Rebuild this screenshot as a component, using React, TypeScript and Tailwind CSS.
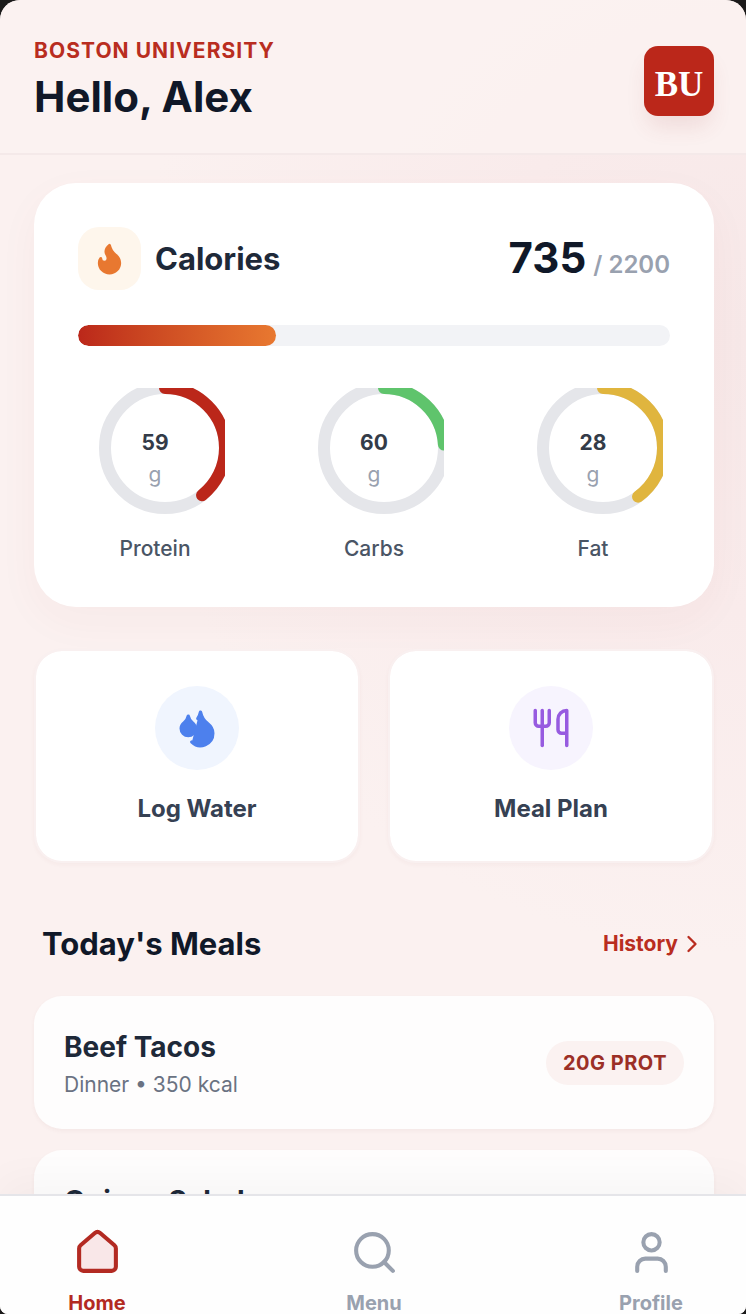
import { ChevronRight, Droplets, Search, User, Utensils } from 'lucide-react';

const macros = [
  { label: 'Protein', grams: 59, goal: 150, stroke: 'stroke-[#bb271a]' },
  { label: 'Carbs', grams: 60, goal: 250, stroke: 'stroke-[#5fc46c]' },
  { label: 'Fat', grams: 28, goal: 70, stroke: 'stroke-[#e0b53e]' },
];

const meals = [
  { name: 'Beef Tacos', info: 'Dinner • 350 kcal', protein: '20G PROT' },
  { name: 'Quinoa Salad', info: 'Lunch • 385 kcal', protein: '12G PROT' },
];

function MacroRing({ label, grams, goal, stroke }: (typeof macros)[number]) {
  const length = 2 * Math.PI * 60;

  return (
    <div className="w-28 flex flex-col items-center">
      <div className="relative w-28 h-[126px]">
        <svg className="w-[126px] h-[126px] max-w-none overflow-hidden" viewBox="0 0 126 126" fill="none">
          <circle cx="66" cy="60" r="60" strokeWidth="12" className="stroke-[#e5e6ea]" />
          <circle
            cx="66"
            cy="60"
            r="60"
            strokeWidth="12"
            strokeLinecap="round"
            strokeDasharray={length}
            strokeDashoffset={length * (1 - grams / goal)}
            transform="rotate(-90 66 60)"
            className={stroke}
          />
        </svg>
        <div className="absolute inset-0 pt-4 flex flex-col items-center justify-center">
          <span className="text-[21px] leading-8 font-bold text-[#333b48]">{grams}</span>
          <span className="text-[21px] leading-8 text-gray-400">g</span>
        </div>
      </div>
      <span className="mt-[21px] text-[21px] leading-7 font-medium text-gray-600">{label}</span>
    </div>
  );
}

function Flame() {
  return (
    <svg viewBox="0 0 24 24" className="w-[35px] h-[35px] fill-[#e87830] stroke-[#e87830]" strokeWidth="2" strokeLinecap="round" strokeLinejoin="round">
      <path d="M8.5 14.5A2.5 2.5 0 0 0 11 12c0-1.38-.5-2-1-3-1.072-2.143-.224-4.054 2-6 .5 2.5 2 4.9 4 6.5 2 1.6 3 3.5 3 5.5a7 7 0 1 1-14 0c0-1.153.433-2.294 1-3a2.5 2.5 0 0 0 2.5 2.5z" />
    </svg>
  );
}

function HomeIcon() {
  return (
    <svg viewBox="0 0 24 24" className="w-[49px] h-[49px] fill-[#f9e7e8] stroke-[#b32a22]" strokeWidth="2" strokeLinecap="round" strokeLinejoin="round">
      <path d="M3 10a2 2 0 0 1 .709-1.528l7-6a2 2 0 0 1 2.582 0l7 6A2 2 0 0 1 21 10v9a2 2 0 0 1-2 2H5a2 2 0 0 1-2-2z" />
    </svg>
  );
}

export default function App() {
  return (
    <div className="h-screen overflow-hidden bg-[#1b1a1a] font-['Inter',sans-serif]">
      <div className="h-full flex flex-col overflow-hidden rounded-t-[20px] rounded-b-lg bg-[#fbf1f0] bg-[radial-gradient(circle_at_100%_26%,#f7e8e8_0%,#f9ebeb_22%,#fbf1f0_50%)]">
        <header className="shrink-0 h-[155px] pl-[34px] pr-8 pt-2 flex items-center justify-between bg-[#fbf2f1]/80 border-b-2 border-[#f4e9e9]">
          <div className="pb-0.5">
            <p className="text-[21px] leading-7 font-bold tracking-wider text-[#b92d20]">BOSTON UNIVERSITY</p>
            <h1 className="mt-1.5 text-[42px] leading-[52px] font-bold text-gray-900">Hello, Alex</h1>
          </div>
          <button
            aria-label="Boston University"
            className="w-[70px] h-[70px] pt-2 rounded-[14px] bg-[#bb271a] text-white font-['Liberation_Serif',serif] font-bold text-[35px] leading-none shadow-[0_14px_22px_-4px_rgba(160,60,60,0.12)]"
          >
            BU
          </button>
        </header>

        <main className="flex-1 min-h-0 overflow-hidden pl-[34px] pr-8 pt-7">
          <section className="rounded-[42px] bg-white px-11 pt-11 pb-11 shadow-[0_14px_44px_rgba(150,60,60,0.04)]">
            <div className="flex items-center justify-between">
              <div className="flex items-center gap-3.5">
                <div className="w-[63px] h-[63px] rounded-[21px] bg-[#fef6ec] flex items-center justify-center">
                  <Flame />
                </div>
                <h2 className="text-[31px] leading-10 font-bold text-gray-800">Calories</h2>
              </div>
              <p className="pb-0.5 flex items-baseline gap-[7px]">
                <span className="text-[42px] leading-[50px] font-bold text-gray-900">735</span>
                <span className="text-[24px] leading-8 font-semibold text-gray-400">/ 2200</span>
              </p>
            </div>

            <div className="mt-[35px] h-[21px] rounded-full bg-[#f2f3f6] overflow-hidden">
              <div
                className="h-full rounded-full bg-gradient-to-r from-[#bb271a] to-[#e87830]"
                style={{ width: `${(735 / 2200) * 100}%` }}
              />
            </div>

            <div className="mt-[42px] px-[21px] flex justify-between">
              {macros.map((macro) => (
                <MacroRing key={macro.label} {...macro} />
              ))}
            </div>
          </section>

          <div className="mt-[42px] grid grid-cols-2 gap-7">
            <button className="h-[214px] rounded-[28px] bg-white bg-clip-padding border-2 border-[#f9f0f0] flex flex-col items-center justify-center gap-[21px] shadow-[0_2px_4px_rgba(120,50,50,0.04)]">
              <span className="w-[84px] h-[84px] rounded-full bg-[#f0f5fe] flex items-center justify-center">
                <Droplets className="w-[42px] h-[42px] text-[#4d80ed] fill-current" />
              </span>
              <span className="text-[24px] leading-9 font-bold text-gray-700">Log Water</span>
            </button>
            <button className="h-[214px] rounded-[28px] bg-white bg-clip-padding border-2 border-[#f9f0f0] flex flex-col items-center justify-center gap-[21px] shadow-[0_2px_4px_rgba(120,50,50,0.04)]">
              <span className="w-[84px] h-[84px] rounded-full bg-[#f7f4fe] flex items-center justify-center">
                <Utensils className="w-[42px] h-[42px] text-[#975be0]" />
              </span>
              <span className="text-[24px] leading-9 font-bold text-gray-700">Meal Plan</span>
            </button>
          </div>

          <div className="mt-[61px] px-2 flex items-center justify-between">
            <h2 className="text-[31px] leading-10 font-bold text-gray-900">Today's Meals</h2>
            <a href="#history" className="flex items-center text-[21px] leading-7 font-bold text-[#b92d20]">
              History
              <ChevronRight className="w-7 h-7" strokeWidth={2} />
            </a>
          </div>

          <ul className="mt-8 flex flex-col gap-[21px]">
            {meals.map((meal) => (
              <li key={meal.name} className="h-[133px] px-[30px] rounded-[28px] bg-[#fefdfd] flex items-center justify-between shadow-[0_2px_4px_rgba(120,50,50,0.05)]">
                <div className="pt-1">
                  <h3 className="text-[28px] leading-10 font-bold text-gray-800">{meal.name}</h3>
                  <p className="text-[21px] leading-9 text-gray-500">{meal.info}</p>
                </div>
                <span className="px-[17px] py-2 rounded-full bg-[#fbf2f1] text-[20px] leading-7 font-bold tracking-wide text-[#9c2f26]">{meal.protein}</span>
              </li>
            ))}
          </ul>
        </main>

        <nav className="shrink-0 h-[120px] pl-[55px] pr-[53px] pt-8 flex items-start justify-between bg-[#fefefe] border-t-2 border-[#e5e5e9] shadow-[0_-14px_40px_rgba(0,0,0,0.03)]">
          <a href="#home" className="w-[84px] flex flex-col items-center gap-3 text-[#b32a22]">
            <HomeIcon />
            <span className="text-[20px] leading-7 font-bold">Home</span>
          </a>
          <a href="#menu" className="w-[84px] flex flex-col items-center gap-3 text-gray-400">
            <Search className="w-[49px] h-[49px]" />
            <span className="text-[20px] leading-7 font-bold">Menu</span>
          </a>
          <a href="#profile" className="w-[84px] flex flex-col items-center gap-3 text-gray-400">
            <User className="w-[49px] h-[49px]" />
            <span className="text-[20px] leading-7 font-bold">Profile</span>
          </a>
        </nav>
      </div>
    </div>
  );
}
